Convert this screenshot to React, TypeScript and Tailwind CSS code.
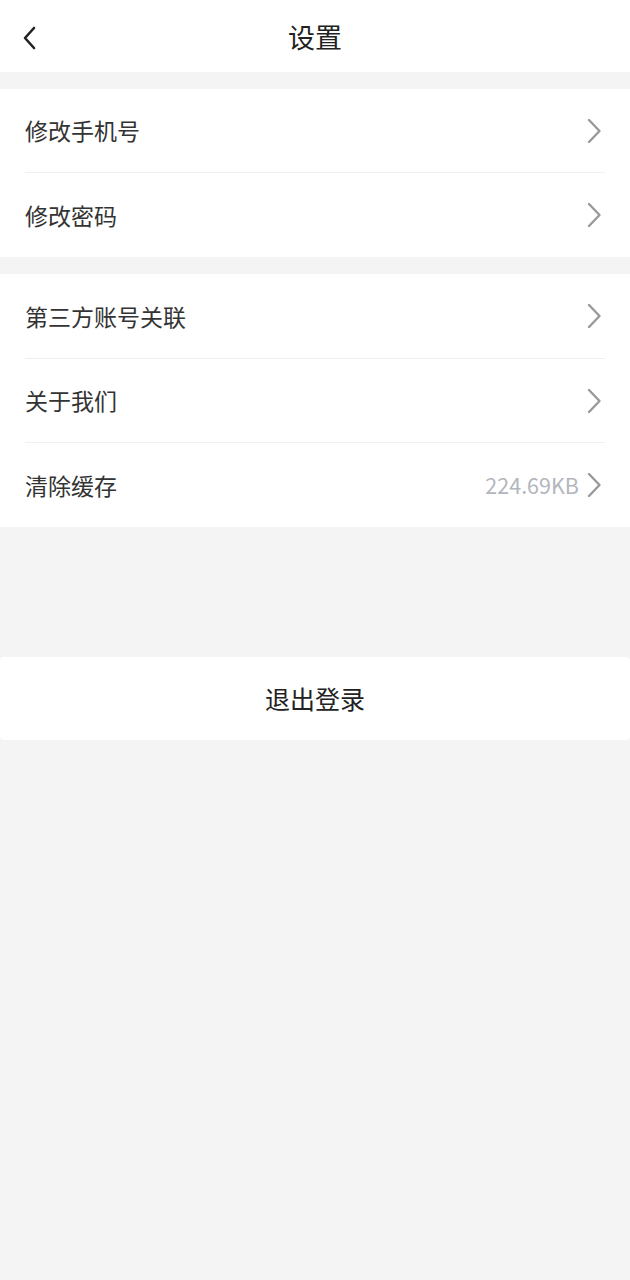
import React from "react";

const Chevron = () => (
  <svg width="18" height="26" viewBox="0 0 18 26" fill="none" className="shrink-0">
    <path d="M4 2 L14.5 13 L4 24" stroke="#999999" strokeWidth="2.4" strokeLinecap="round" strokeLinejoin="round" />
  </svg>
);

const Row = ({ label, value, divider, tall }: { label: string; value?: string; divider?: boolean; tall?: boolean }) => (
  <div className="px-[25px]">
    <div className={`flex items-center ${tall ? "h-[85px]" : "h-[84px]"} ${divider ? "border-b border-[#f0f0f0]" : ""}`}>
      <span className="flex-1 text-[23px] text-[#333333]">{label}</span>
      {value && <span className="text-[21.5px] text-[#b3b6bd] mr-[6px]">{value}</span>}
      <div className="mr-[2px]"><Chevron /></div>
    </div>
  </div>
);

export default function App() {
  return (
    <div
      className="w-[630px] h-[1280px] bg-[#f4f4f4] flex flex-col"
      style={{ fontFamily: '"Noto Sans CJK SC", "Noto Sans", sans-serif' }}
    >
      <div className="h-[72px] bg-white flex items-center relative shrink-0">
        <svg width="16" height="24" viewBox="0 0 16 24" fill="none" className="absolute left-[22px] top-[26px]">
          <path d="M12 2 L3 12 L12 22" stroke="#222" strokeWidth="2.6" strokeLinecap="round" strokeLinejoin="round" />
        </svg>
        <div className="flex-1 text-center text-[27px] text-[#222] mt-[2px]">设置</div>
      </div>
      <div className="mt-[17px] bg-white">
        <Row label="修改手机号" divider />
        <Row label="修改密码" />
      </div>
      <div className="mt-[17px] bg-white">
        <Row label="第三方账号关联" divider tall />
        <Row label="关于我们" divider />
        <Row label="清除缓存" value="224.69KB" />
      </div>
      <div className="mt-[130px] bg-white h-[83px] flex items-center justify-center rounded-[4px]">
        <span className="text-[25px] text-[#222]">退出登录</span>
      </div>
    </div>
  );
}
